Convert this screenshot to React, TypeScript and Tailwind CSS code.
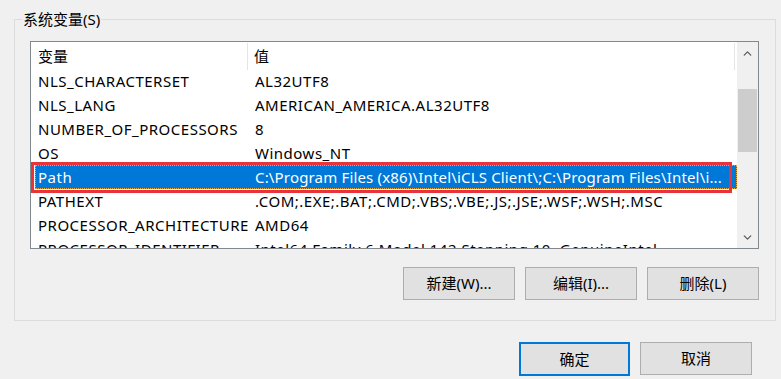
import { ChevronUp, ChevronDown } from "lucide-react";

const rows = [
  { name: "NLS_CHARACTERSET", value: "AL32UTF8" },
  { name: "NLS_LANG", value: "AMERICAN_AMERICA.AL32UTF8" },
  { name: "NUMBER_OF_PROCESSORS", value: "8" },
  { name: "OS", value: "Windows_NT" },
  { name: "Path", value: "C:\\Program Files (x86)\\Intel\\iCLS Client\\;C:\\Program Files\\Intel\\i...", selected: true },
  { name: "PATHEXT", value: ".COM;.EXE;.BAT;.CMD;.VBS;.VBE;.JS;.JSE;.WSF;.WSH;.MSC" },
  { name: "PROCESSOR_ARCHITECTURE", value: "AMD64" },
  { name: "PROCESSOR_IDENTIFIER", value: "Intel64 Family 6 Model 142 Stepping 10, GenuineIntel" },
];

const Button = ({ label, primary }: { label: string; primary?: boolean }) => (
  <div
    className={
      primary
        ? "w-[111px] h-[34px] flex items-center justify-center bg-[#e1e1e1] border-2 border-[#0078d7] text-black"
        : "w-[112px] h-[33px] flex items-center justify-center bg-[#e1e1e1] border border-[#adadad] text-black"
    }
  >
    {label}
  </div>
);

export default function App() {
  return (
    <div className="w-[781px] h-[379px] bg-[#f0f0f0] overflow-hidden text-[15px] text-black font-['Segoe_UI','Noto_Sans','Noto_Sans_CJK_SC',sans-serif]">
      <div className="pt-[19px] pl-[14px]">
        <div className="relative w-[762px] h-[302px] border border-[#dcdcdc] pl-[15px] pt-[21px]">
          <div className="absolute left-[7px] top-[-11px] px-[1px] bg-[#f0f0f0] leading-[20px]">
            系统变量(S)
          </div>

          {/* list view */}
          <div className="relative w-[729px] h-[208px] border border-[#828790] bg-white flex overflow-hidden">
            <div className="w-[706px] flex flex-col">
              <div className="h-[27px] flex items-center shrink-0">
                <div className="w-[217px] h-full pl-[7px] flex items-center border-r border-[#e5e5e5] mt-[1px]">变量</div>
                <div className="w-[487px] h-full pl-[6px] flex items-center border-r border-[#e5e5e5] mt-[1px]">值</div>
              </div>
              {rows.map((r) => (
                <div key={r.name} className="h-[24px] shrink-0 pl-[4px] flex">
                  <div
                    className={
                      r.selected
                        ? "flex-1 flex bg-[#0078d7] text-white outline-1 outline-dotted outline-[#e8a33c] -outline-offset-1"
                        : "flex-1 flex"
                    }
                  >
                    <div className="w-[213px] pl-[3px] leading-[24px] whitespace-nowrap overflow-hidden tracking-[0.5px]">
                      {r.name}
                    </div>
                    <div
                      className={
                        r.selected
                          ? "flex-1 pl-[7px] leading-[24px] whitespace-nowrap overflow-hidden tracking-[0.17px]"
                          : "flex-1 pl-[7px] leading-[24px] whitespace-nowrap overflow-hidden tracking-[0.5px]"
                      }
                    >
                      {r.value}
                    </div>
                  </div>
                </div>
              ))}
            </div>
            <div className="w-[21px] bg-[#f0f0f0] flex flex-col items-center">
              <div className="h-[24px] w-full flex items-center justify-center text-[#606060] mt-[-1px]">
                <ChevronUp size={13} strokeWidth={2.5} />
              </div>
              <div className="h-[24px]" />
              <div className="w-[19px] h-[63px] bg-[#cdcdcd]" />
              <div className="flex-1" />
              <div className="h-[24px] w-full flex items-center justify-center text-[#606060] mb-[-1px]">
                <ChevronDown size={13} strokeWidth={2.5} />
              </div>
            </div>
          </div>

          <div className="flex justify-end gap-[10px] mt-[18px] w-[729px]">
            <Button label="新建(W)..." />
            <Button label="编辑(I)..." />
            <Button label="删除(L)" />
          </div>

          {/* red annotation box */}
          <div className="absolute left-[16px] top-[142px] w-[701px] h-[31px] border-[3px] border-[#e8333a]" />
        </div>
      </div>

      <div className="flex justify-end gap-[10px] pr-[29px] mt-[21px]">
        <Button label="确定" primary />
        <Button label="取消" />
      </div>
    </div>
  );
}
